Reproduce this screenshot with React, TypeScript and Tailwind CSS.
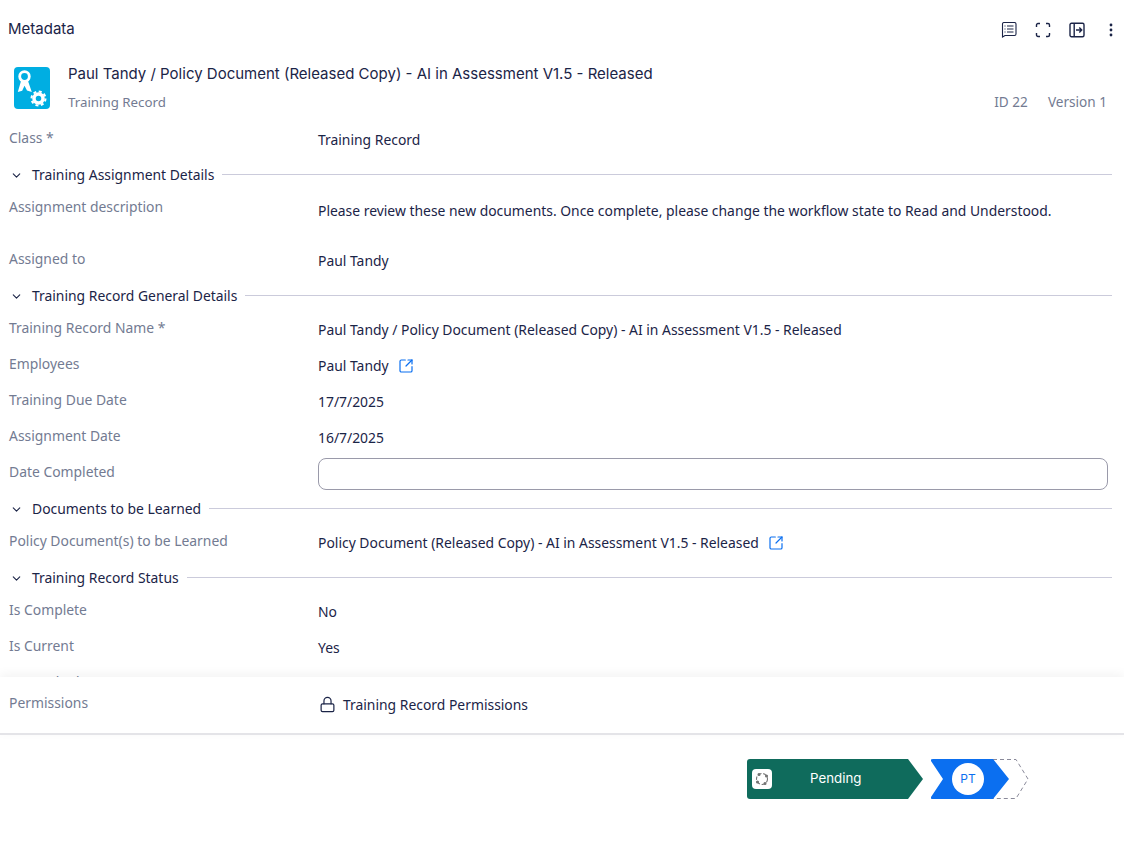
import React from 'react';
import { ChevronDown, Lock, SquareArrowOutUpRight } from 'lucide-react';

const Field = ({ label, children, className = 'h-9' }: { label: string; children?: React.ReactNode; className?: string }) => (
  <div className={`flex shrink-0 ${className}`}>
    <div className="w-[318px] shrink-0 pl-[9px] pt-[6px] text-[13.9px] leading-5 text-[#737b92]">{label}</div>
    <div className="flex flex-1 items-start pt-[8px] text-[13.9px] leading-5 text-[#1b2447]">{children}</div>
  </div>
);

const Section = ({ title }: { title: string }) => (
  <div className="flex h-[33px] shrink-0 items-center pl-[10px] pr-3">
    <ChevronDown className="mt-[2px] h-[13px] w-[13px] text-[#1b2447]" strokeWidth={2} />
    <span className="ml-[9px] mt-[2px] text-[13.9px] text-[#1b2447]">{title}</span>
    <div className="ml-2 h-px flex-1 bg-[#cbcbdb]" />
  </div>
);

const LinkIcon = () => <SquareArrowOutUpRight className="ml-[9px] mt-[2px] h-4 w-4 text-[#0b6ff0]" strokeWidth={1.8} />;

export default function App() {
  return (
    <div className="flex h-[852px] w-[1124px] flex-col overflow-hidden bg-white font-['Noto_Sans',sans-serif]">
      <div className="flex h-[60px] shrink-0 items-center justify-between pb-[2px] pl-[8px] pr-[5px]">
        <span className="font-['Inter',sans-serif] text-[15px] text-[#1b2447]">Metadata</span>
        <div className="flex items-center pt-[2px] text-[#1b2447]">
          <svg className="h-4 w-4" viewBox="0 0 16 16" fill="none" stroke="currentColor" strokeWidth="1.100">
            <path d="M1.500 15V2A1.500 1.500 0 0 1 3 .5h10.500A1.500 1.500 0 0 1 15 2v10a1.500 1.500 0 0 1-1.500 1.500H4z" />
            <path d="M6 4h6.500M6 7h6.500M6 10h6.500M3.500 4h1M3.500 7h1M3.500 10h1" />
          </svg>
          <svg className="ml-[18px] h-4 w-4" viewBox="0 0 16 16" fill="none" stroke="currentColor" strokeWidth="1.400">
            <path d="M1.500 5V3a1.500 1.500 0 0 1 1.500-1.500h2M11 1.500h2A1.500 1.500 0 0 1 14.500 3v2M14.500 11v2a1.500 1.500 0 0 1-1.500 1.500h-2M5 14.500H3A1.500 1.500 0 0 1 1.500 13v-2" />
          </svg>
          <svg className="ml-[18px] h-4 w-4" viewBox="0 0 16 16" fill="none" stroke="currentColor" strokeWidth="1.400">
            <rect x="1" y="1.200" width="14" height="13.600" rx="1.500" />
            <path d="M5.200 1.500v13M7 8h5.500M10.300 5.600 12.700 8l-2.400 2.400" />
          </svg>
          <svg className="ml-[18px] h-4 w-4" viewBox="0 0 16 16" fill="currentColor">
            <circle cx="8" cy="3" r="1.400" />
            <circle cx="8" cy="8" r="1.400" />
            <circle cx="8" cy="13" r="1.400" />
          </svg>
        </div>
      </div>

      <div className="flex h-[62px] shrink-0 pl-[14px] pr-[17px]">
        <svg className="mt-[7px] h-[42px] w-9" viewBox="0 0 36 42">
          <rect width="36" height="42" rx="4" fill="#00aee2" />
          <circle cx="10.500" cy="9.500" r="4.800" fill="none" stroke="#fff" strokeWidth="2.800" />
          <path d="M7 14 3.800 25l4.400-1.200 2.300-5 2.500 4.800 4.800 1.400-3.800-11z" fill="#fff" />
          <circle cx="24.500" cy="31.500" r="4.500" fill="none" stroke="#fff" strokeWidth="3.500" />
          <circle cx="24.500" cy="31.500" r="7" fill="none" stroke="#fff" strokeWidth="2" strokeDasharray="3 2.500" />
        </svg>
        <div className="ml-[18px] flex-1">
          <div className="mt-[2px] font-['Inter',sans-serif] text-[15px] leading-6 text-[#1b2447]">
            Paul Tandy / Policy Document (Released Copy) - AI in Assessment V1.5 - Released
          </div>
          <div className="mt-[6px] flex items-center justify-between leading-5 text-[#737b92]">
            <span className="text-[13.3px]">Training Record</span>
            <span className="pl-1 text-[13.600px]">
              ID 22<span className="ml-5">Version 1</span>
            </span>
          </div>
        </div>
      </div>

      <div className="flex h-[555px] shrink-0 flex-col overflow-hidden">
        <Field label="Class *">
          <span>Training Record</span>
        </Field>
        <Section title="Training Assignment Details" />
        <Field label="Assignment description" className="h-[52px]">
          <span className="mt-[2px]">Please review these new documents. Once complete, please change the workflow state to Read and Understood.</span>
        </Field>
        <Field label="Assigned to">
          <span>Paul Tandy</span>
        </Field>
        <Section title="Training Record General Details" />
        <Field label="Training Record Name *">
          <span>Paul Tandy / Policy Document (Released Copy) - AI in Assessment V1.5 - Released</span>
        </Field>
        <Field label="Employees">
          <span>Paul Tandy</span>
          <LinkIcon />
        </Field>
        <Field label="Training Due Date">
          <span>17/7/2025</span>
        </Field>
        <Field label="Assignment Date">
          <span>16/7/2025</span>
        </Field>
        <div className="flex h-[36px] shrink-0">
          <div className="w-[318px] shrink-0 pl-[9px] pt-[6px] text-[13.9px] leading-5 text-[#737b92]">Date Completed</div>
          <div className="mr-[16px] mt-[2px] h-[32px] flex-1 rounded-lg border border-[#9a9aaa] bg-white" />
        </div>
        <Section title="Documents to be Learned" />
        <Field label="Policy Document(s) to be Learned">
          <span>Policy Document (Released Copy) - AI in Assessment V1.5 - Released</span>
          <LinkIcon />
        </Field>
        <Section title="Training Record Status" />
        <Field label="Is Complete">
          <span>No</span>
        </Field>
        <Field label="Is Current">
          <span>Yes</span>
        </Field>
        <Field label="Is Revoked" />
      </div>

      <div className="relative flex h-[58px] shrink-0 border-b-2 border-[#e4e4e8] bg-white shadow-[0_-3px_10px_rgba(0,0,0,0.05)]">
        <div className="w-[318px] shrink-0 pl-[9px] pt-[16px] text-[13.9px] leading-5 text-[#737b92]">Permissions</div>
        <div className="flex items-start pt-[18px] text-[13.9px] leading-5 text-[#1b2447]">
          <Lock className="ml-px mt-[1px] h-[17px] w-[17px]" strokeWidth={1.700} />
          <span className="ml-[7px]">Training Record Permissions</span>
        </div>
      </div>

      <div className="flex flex-1 items-start pl-[747px] pt-[24px]">
        <div className="flex h-10 w-[176px] items-center rounded-l-[3px] bg-[#0f6b5c] [clip-path:polygon(0_0,161px_0,176px_20px,161px_40px,0_40px)]">
          <div className="ml-[5px] flex h-5 w-5 items-center justify-center rounded-[4px] bg-white">
            <svg className="h-4 w-4" viewBox="0 0 16 16" fill="none" stroke="#777" strokeWidth="1.100">
              <circle cx="8" cy="8" r="5.500" strokeDasharray="3.500 1.800" />
              <circle cx="5" cy="3.500" r="1" fill="#666" />
              <circle cx="12.500" cy="5" r="1" fill="#666" />
              <circle cx="11" cy="12.500" r="1" fill="#666" />
              <circle cx="3.500" cy="11" r="1" fill="#666" />
            </svg>
          </div>
          <span className="ml-[38px] font-['Inter',sans-serif] text-[13.3px] text-white">Pending</span>
        </div>
        <div className="relative ml-[8px] h-10 w-[98px]">
          <svg className="absolute left-0 top-0 h-10 w-[98px]" viewBox="0 0 98 40" fill="none">
            <path d="M62 .5h23l12 19.500-12 19.500h-23" stroke="#8a8a9a" strokeDasharray="4 3" />
            <path d="M2 0h60l16 20-16 20H2q-3 0-2-2l12-18L0 2q-1-2 2-2z" fill="#0b6ff0" />
          </svg>
          <div className="absolute left-[21px] top-[4px] flex h-8 w-8 items-center justify-center rounded-full bg-white font-['Inter',sans-serif] text-[12px] text-[#0b6ff0]">PT</div>
        </div>
      </div>
    </div>
  );
}
